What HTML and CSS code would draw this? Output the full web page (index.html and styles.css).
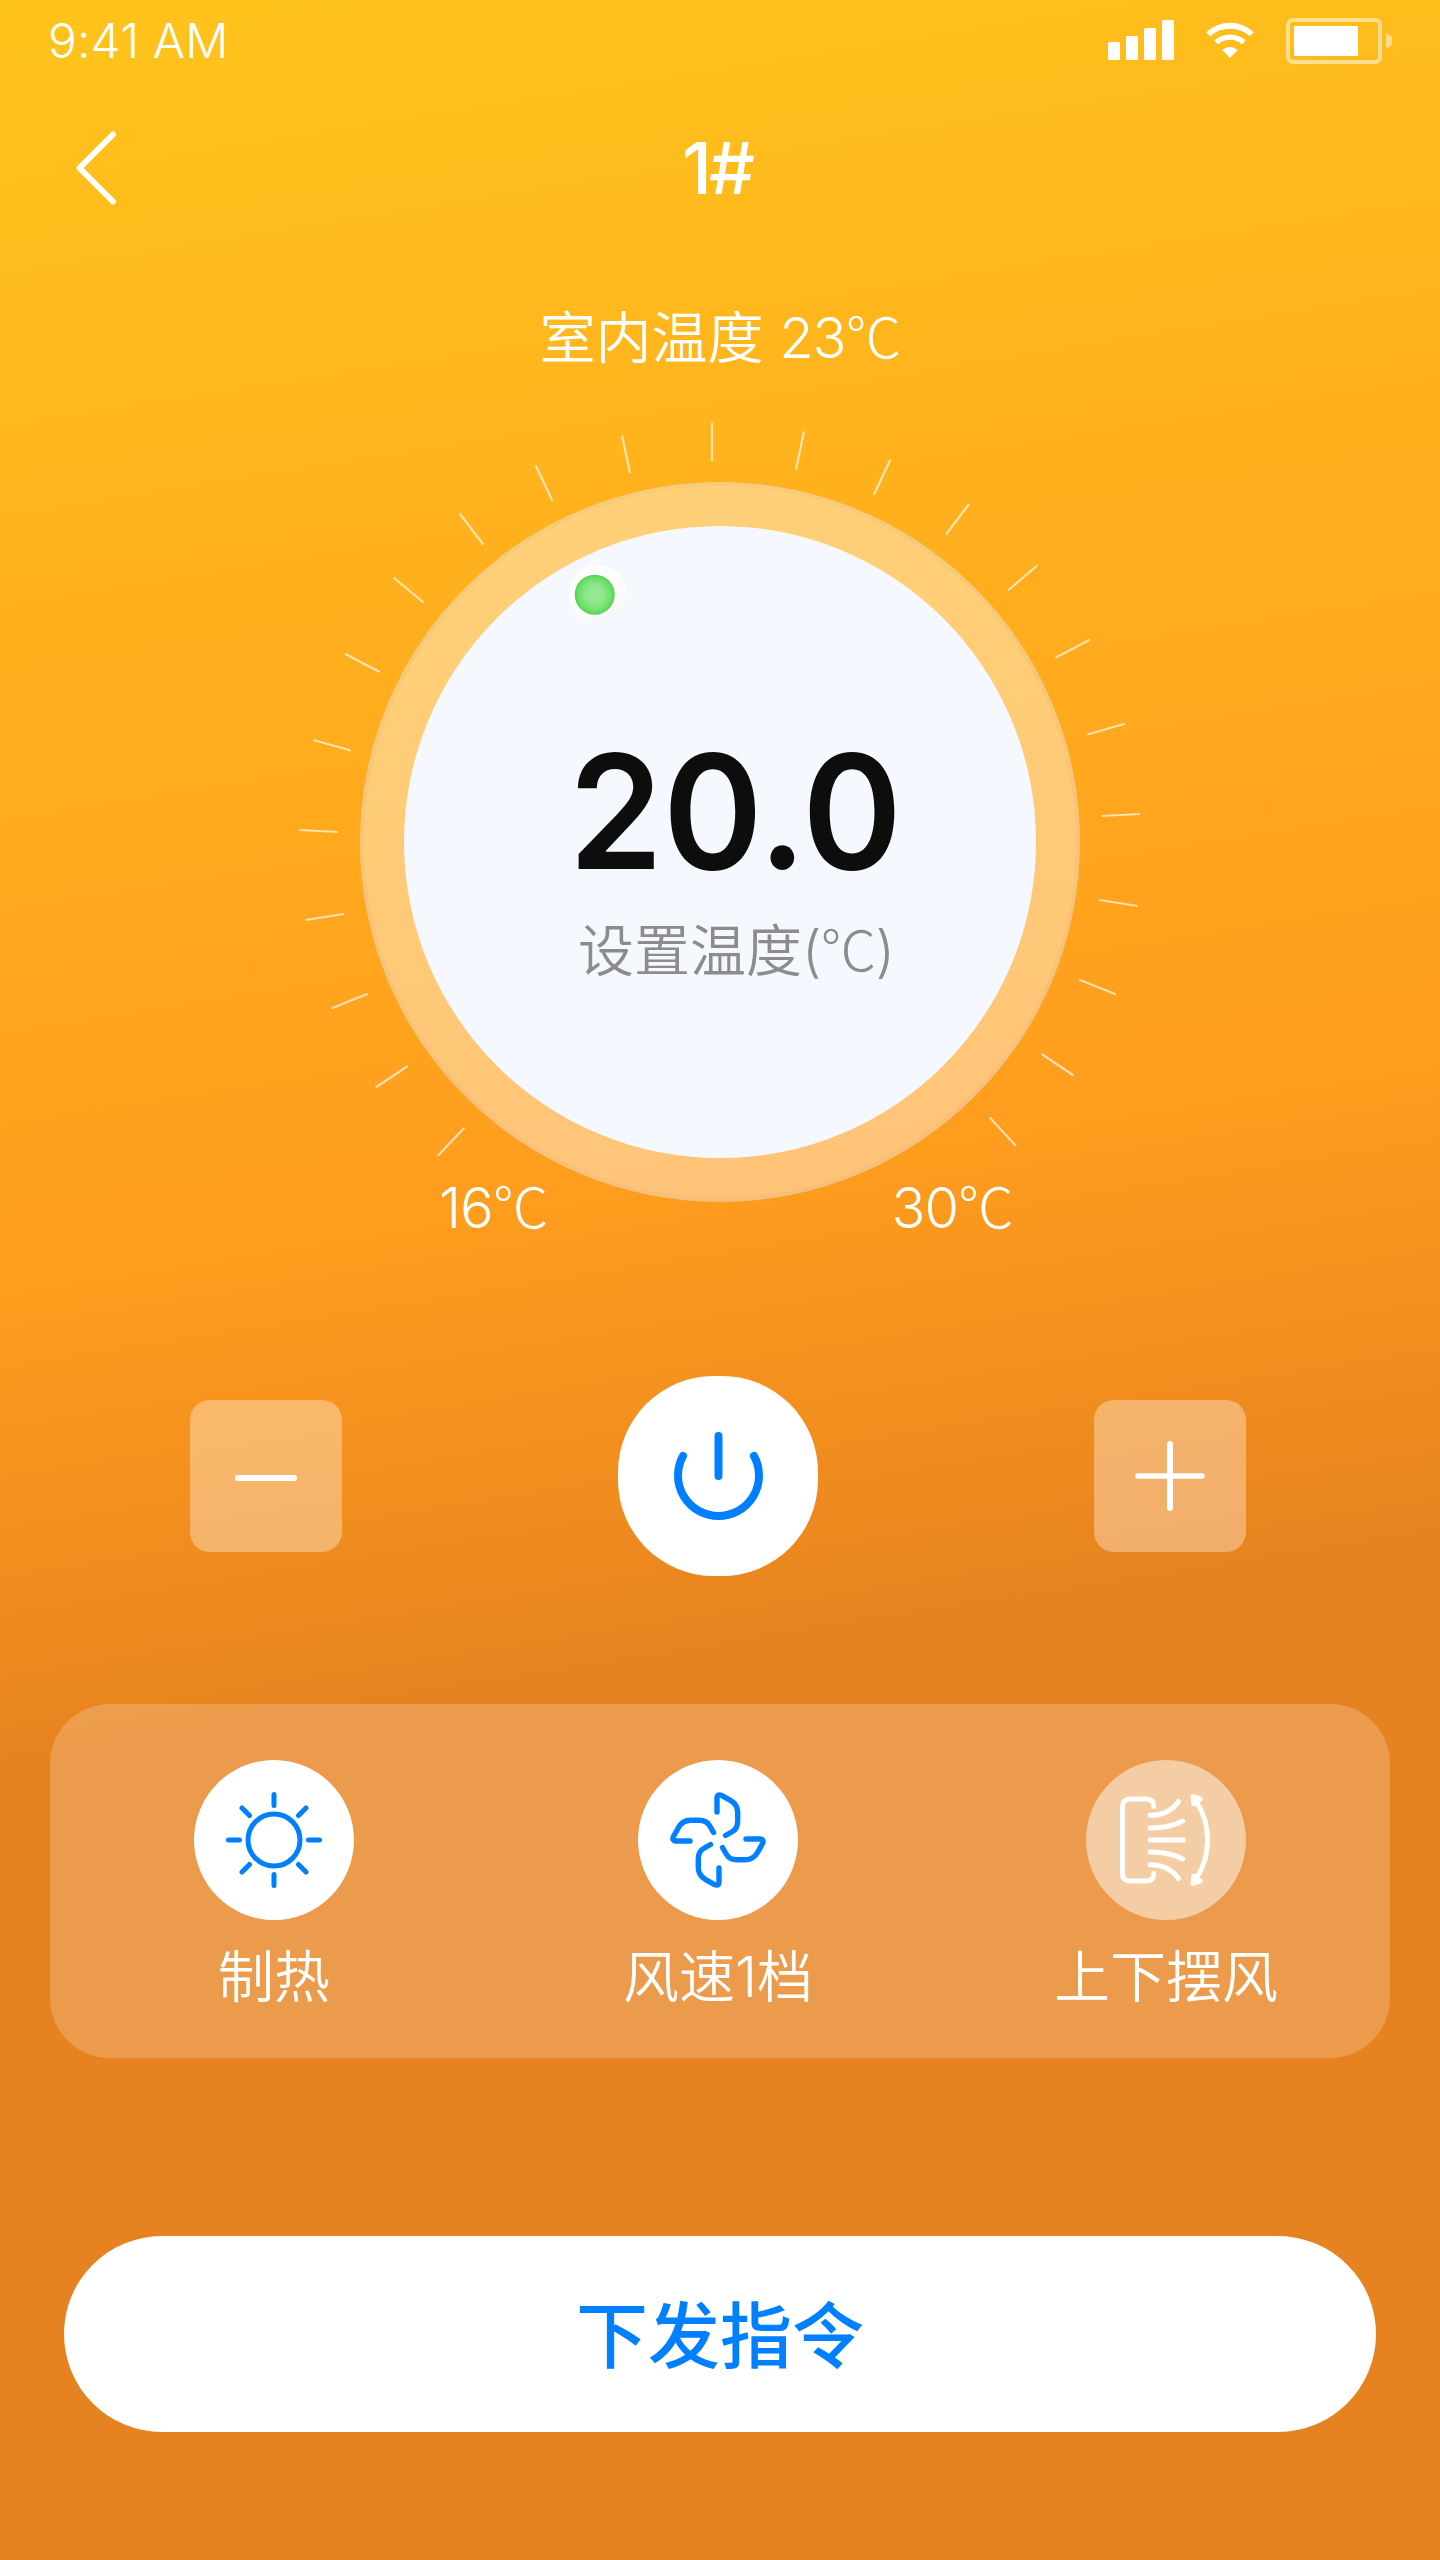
FILE: index.html
```html
<!DOCTYPE html>
<html lang="zh-CN">
<head>
<meta charset="utf-8">
<title>1#</title>
<link rel="stylesheet" href="styles.css">
</head>
<body>
<main class="screen">
  <header class="status">
    <span class="time">9:41 AM</span>
    <svg class="status-icons" width="284" height="46" viewBox="1108 18 284 46" fill="#fff">
      <rect x="1108" y="42" width="12" height="18" rx="1.5"/>
      <rect x="1126" y="36" width="12" height="24" rx="1.5"/>
      <rect x="1144" y="28" width="12" height="32" rx="1.5"/>
      <rect x="1162" y="20" width="12" height="40" rx="1.5"/>
      <path d="M1206.2 32.2A35 35 0 0 1 1253.8 32.2L1249.7 36.2A29.5 29.5 0 0 0 1210.3 36.2Z"/>
      <path d="M1214.2 40.6A23.4 23.4 0 0 1 1245.8 40.6L1241.8 44.4A17.5 17.5 0 0 0 1218.2 44.4Z"/>
      <path d="M1222.2 50A12 12 0 0 1 1237.8 50L1230 58Z"/>
      <rect x="1288" y="20" width="92" height="42" rx="5" fill="none" stroke="#fff" stroke-width="4" opacity=".5"/>
      <rect x="1294" y="26" width="64" height="30" rx="1"/>
      <path d="M1386 34a6.5 7 0 0 1 0 14z" opacity=".5"/>
    </svg>
  </header>

  <nav class="navbar">
    <svg class="back" width="44" height="80" viewBox="74 128 44 80" fill="none" stroke="#fff" stroke-width="6" stroke-linecap="round" stroke-linejoin="round"><path d="M113 134.500L79.500 168L113 201.500"/></svg>
    <h1 class="title">1#</h1>
  </nav>

  <p class="room">室内温度 <span class="num">23<span class="deg">℃</span></span></p>

  <section class="dial">
    <svg class="ticks" width="1440" height="860" viewBox="0 400 1440 860" stroke="#fff" stroke-opacity=".65" stroke-width="2.200" fill="none">
      <path d="M712 423V461M622 435.500L630 473M535.700 465.500L552.300 500.500M459.700 513.500L483.200 544.500M393.500 577.500L423.500 602.500M345.300 654L379.700 672M313.300 740L350.700 750.500M299.300 830L338 832M305.300 920L343.700 914M331.300 1008.500L367.700 993.700M375.700 1087.500L407.700 1066M437.700 1156L464.300 1127.700"/>
      <path d="M804 431.500L796 469.500M890.300 459.700L874 494.500M969 504L946 534.500M1037.200 565.500L1008 590.500M1089.700 639.700L1055.300 657.900M1124.700 723.700L1087.300 734.500M1140 814L1101.300 816M1099.300 900L1137.700 906M1079.300 979.700L1115.700 994.300M1041.700 1054L1073.500 1075.500M989.700 1117.500L1016 1146"/>
    </svg>
    <div class="ring">
      <div class="face">
        <strong class="temp">20.0</strong>
        <span class="caption">设置温度<span class="num">(<span class="deg">℃</span>)</span></span>
      </div>
    </div>
    <svg class="knob" width="1440" height="860" viewBox="0 400 1440 860">
      <defs>
        <radialGradient id="green"><stop offset="0" stop-color="#97ea93"/><stop offset=".45" stop-color="#8de789"/><stop offset=".85" stop-color="#6bde68"/><stop offset="1" stop-color="#4ed14c"/></radialGradient>
        <linearGradient id="cap" x1=".2" y1="0" x2=".75" y2="1"><stop offset=".45" stop-color="#fff"/><stop offset="1" stop-color="#f4f5f8"/></linearGradient>
      </defs>
      <circle cx="598" cy="594" r="29" fill="url(#cap)"/>
      <circle cx="594.700" cy="594.700" r="20" fill="url(#green)"/>
    </svg>
    <div class="range"><span class="num">16<span class="deg">℃</span></span><span class="num">30<span class="deg">℃</span></span></div>
  </section>

  <section class="controls">
    <button class="step" aria-label="minus"><svg width="80" height="80" viewBox="0 0 80 80"><rect x="9" y="39" width="62" height="6" rx="3" fill="#fff"/></svg></button>
    <button class="power" aria-label="power"><svg width="100" height="100" viewBox="668 1426 100 100" fill="none" stroke="#0080ff" stroke-width="8" stroke-linecap="round"><path d="M718.500 1436V1476M683 1456A40.500 40.500 0 1 0 754 1456"/></svg></button>
    <button class="step" aria-label="plus"><svg width="80" height="80" viewBox="0 0 80 80" stroke="#fff" stroke-width="6" stroke-linecap="round"><path d="M8 40H72" stroke-width="5.500"/><path d="M40 8V72"/></svg></button>
  </section>

  <section class="modes">
    <div class="mode">
      <span class="disc"><svg width="100" height="100" viewBox="0 0 100 100" fill="none" stroke="#0080ff" stroke-width="5" stroke-linecap="round"><circle cx="50" cy="50" r="26"/><path d="M50 4.500V15.500M50 84.500V95.500M4.500 50H15.500M84.500 50H95.500M18 18L25.500 25.500M82 18L74.500 25.500M18 82L25.500 74.500M82 82L74.500 74.500"/></svg></span>
      <span class="label">制热</span>
    </div>
    <div class="mode">
      <span class="disc"><svg width="100" height="100" viewBox="0 0 100 100" fill="none" stroke="#0080ff" stroke-width="5.400" stroke-linecap="round" stroke-linejoin="round"><path id="blade" d="M49 22V7.500Q49.500 4 53 5.200L62 10.200Q69.700 14.500 69.700 22.500V31Q69.700 38.500 64.500 41.500L57.500 45.500"/><use href="#blade" transform="rotate(90 50 50)"/><use href="#blade" transform="rotate(180 50 50)"/><use href="#blade" transform="rotate(270 50 50)"/></svg></span>
      <span class="label">风速<span class="one">1</span>档</span>
    </div>
    <div class="mode">
      <span class="disc off"><svg width="100" height="100" viewBox="0 0 100 100" fill="none" stroke="#fff" stroke-width="5" stroke-linecap="round" stroke-linejoin="round"><path d="M37.700 16.500Q37.700 9 30 9H14Q6.500 9 6.500 17V83Q6.500 91 14 91H30Q37.700 91 37.700 83.500M34 25.300Q53 25.300 62.500 11.500M34 38Q54 38 66.500 31M34 50H67.500M34 62Q54 62 66.500 69M34 74.700Q53 74.700 62.500 88.500M81 13Q91.500 29 91.500 50T81 87"/><path d="M77 6.500L84 9.200L77.700 14ZM77 93.500L84 91L77.700 86Z" fill="#fff"/></svg></span>
      <span class="label">上下摆风</span>
    </div>
  </section>

  <button class="send">下发指令</button>
</main>
</body>
</html>
```
FILE: styles.css
```css
* { box-sizing: border-box; margin: 0; padding: 0; }
body { font-family: Inter, "Noto Sans CJK SC", sans-serif; font-weight: 300; color: #fff; }
button { border: 0; font: inherit; color: inherit; }
svg { display: block; flex: none; }

.screen {
  width: 1440px;
  height: 2560px;
  display: flex;
  flex-direction: column;
  overflow: hidden;
  background: linear-gradient(171deg, #ffc41c 0%, #ff9d1e 46%, #e6821f 64%);
}

.status { height: 88px; padding: 0 48px; display: flex; justify-content: space-between; align-items: flex-start; }
.time { font-size: 48px; line-height: 82px; letter-spacing: 0.1px; }
.status-icons { margin-top: 18px; }

.navbar { height: 160px; display: grid; grid-template-columns: 200px 1fr 200px; align-items: center; }
.back { margin-left: 74px; }
.title { padding-right: 6px; font-size: 72px; line-height: 160px; font-weight: 500; letter-spacing: -3px; text-align: center; }

.room, .caption, .label { font-weight: 350; }
.room { height: 152px; line-height: 180px; font-size: 56px; text-align: center; white-space: pre; }
.num { font-weight: 300; letter-spacing: -1px; }
.one { font-weight: 300; }
.deg { font-family: "Noto Sans CJK SC", sans-serif; font-weight: 300; line-height: 1; }

.dial { height: 860px; display: grid; }
.dial > * { grid-area: 1 / 1; }
.ring {
  width: 720px;
  height: 720px;
  margin: 82px auto 0;
  padding: 44px;
  border-radius: 50%;
  background: rgba(255, 255, 255, .4);
  box-shadow: inset 0 0 0 4px rgba(160, 160, 160, .09);
}
.face {
  height: 632px;
  padding: 193px 0 0 30px;
  border-radius: 50%;
  background: #f5f9ff;
  display: flex;
  flex-direction: column;
  align-items: center;
}
.temp { font-size: 159px; line-height: 184px; font-weight: 560; color: #0d0d0d; transform: scaleX(.95); }
.caption { padding-left: 2px; font-size: 56px; line-height: 96px; color: #8c8c8c; }
.range {
  align-self: end;
  margin: 0 427px 12px 439px;
  display: flex;
  justify-content: space-between;
  font-size: 56px;
  line-height: 80px;
}

.controls { height: 432px; margin-bottom: 12px; padding: 0 194px 0 190px; display: flex; justify-content: space-between; align-items: center; }
.step, .power { display: flex; justify-content: center; align-items: center; }
.step { width: 152px; height: 152px; border-radius: 20px; background: rgba(255, 255, 255, .34); }
.power { width: 200px; height: 200px; border-radius: 96px; background: #fff; }

.modes {
  height: 354px;
  margin: 0 50px;
  padding: 56px 144px 0;
  border-radius: 60px;
  background: rgba(255, 255, 255, .2);
  display: grid;
  grid-template-columns: 444px 448px 160px;
}
.mode { width: 160px; display: flex; flex-direction: column; align-items: center; }
.disc { width: 160px; height: 160px; border-radius: 50%; background: #fff; display: flex; justify-content: center; align-items: center; }
.disc.off { background: rgba(255, 255, 255, .5); }
.label { font-size: 56px; line-height: 114px; white-space: nowrap; }

.send {
  height: 196px;
  margin: 178px 64px 0;
  padding-bottom: 8px;
  border-radius: 98px;
  background: #fff;
  color: #0080ff;
  font-size: 72px;
  font-weight: 500;
}
```
